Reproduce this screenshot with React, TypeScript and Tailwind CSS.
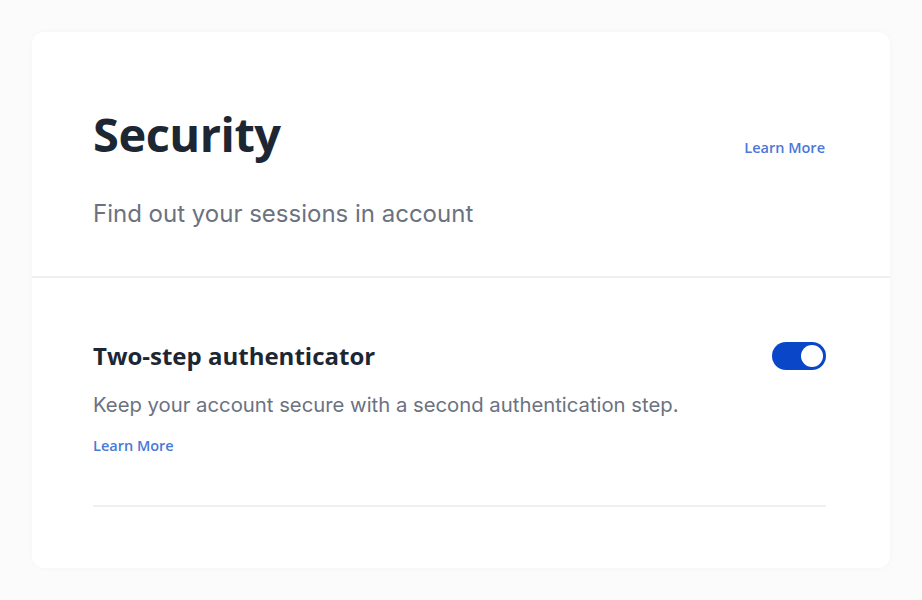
const headingFont = { fontFamily: '"Open Sans", Lato, sans-serif' };

function Toggle({ on }: { on: boolean }) {
  return (
    <button
      type="button"
      className={`flex h-[28px] w-[54px] items-center rounded-full p-[3px] ${on ? 'justify-end bg-[#0a47c8]' : 'justify-start bg-gray-300'}`}
    >
      <span className="h-[22px] w-[22px] rounded-full bg-white" />
    </button>
  );
}

export default function App() {
  return (
    <div className="min-h-[600px] bg-[#fbfbfb] p-[32px] font-['Inter',sans-serif]">
      <div className="h-[536px] w-[858px] rounded-[12px] bg-white shadow-[0_0_6px_rgba(0,0,0,0.03)]">
        {/* Header */}
        <div className="h-[246px] border-b-2 border-[#efefef] pl-[61px] pr-[65px] pt-[72px]">
          <div className="flex items-center justify-between">
            <h1 className="text-[47px] font-bold leading-[60px] tracking-[-0.5px] text-[#1d2733]" style={headingFont}>
              Security
            </h1>
            <a className="mt-[28px] text-[14.5px] font-semibold text-[#4a78d8]" style={headingFont}>
              Learn More
            </a>
          </div>
          <p className="mt-[34px] text-[24px] leading-[32px] text-[#6b7280]">Find out your sessions in account</p>
        </div>

        {/* Two-step */}
        <div className="pl-[61px] pr-[64px] pt-[62px]">
          <div className="border-b-2 border-[#efefef] pb-[48px]">
            <div className="flex items-center justify-between">
              <h2 className="text-[24px] font-bold leading-[32px] text-[#1d2733]" style={headingFont}>
                Two-step authenticator
              </h2>
              <Toggle on />
            </div>
            <p className="mt-[19px] text-[20.3px] leading-[28px] text-[#6b7280]">
              Keep your account secure with a second authentication step.
            </p>
            <a className="mt-[16px] block text-[14.5px] font-semibold leading-[22px] text-[#4a78d8]" style={headingFont}>
              Learn More
            </a>
          </div>
        </div>
      </div>
    </div>
  );
}
